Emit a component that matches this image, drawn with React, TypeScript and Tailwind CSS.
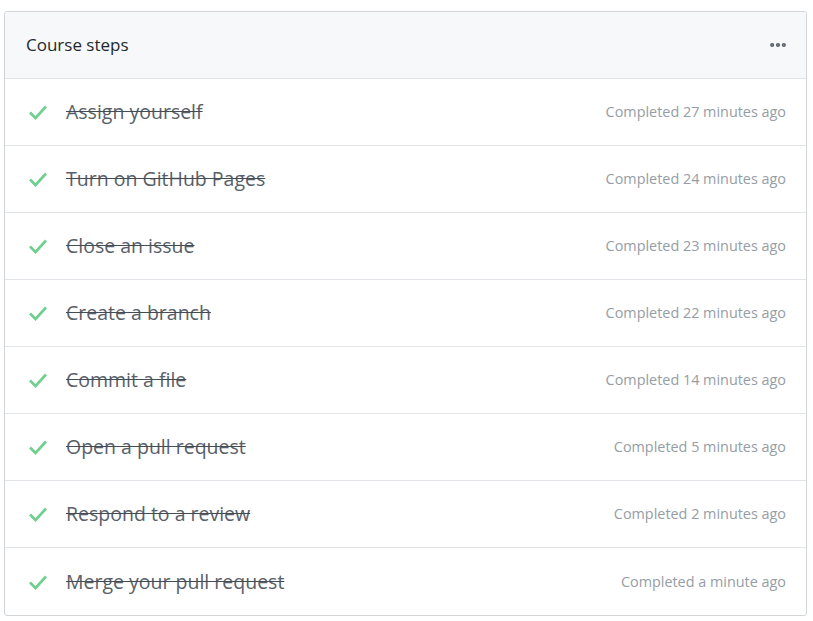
import { MoreHorizontal } from 'lucide-react'

const steps = [
  { title: 'Assign yourself', done: 'Completed 27 minutes ago' },
  { title: 'Turn on GitHub Pages', done: 'Completed 24 minutes ago' },
  { title: 'Close an issue', done: 'Completed 23 minutes ago' },
  { title: 'Create a branch', done: 'Completed 22 minutes ago' },
  { title: 'Commit a file', done: 'Completed 14 minutes ago' },
  { title: 'Open a pull request', done: 'Completed 5 minutes ago' },
  { title: 'Respond to a review', done: 'Completed 2 minutes ago' },
  { title: 'Merge your pull request', done: 'Completed a minute ago' },
]

function Check() {
  return (
    <svg width="20" height="16" viewBox="0 0 20 16" className="shrink-0">
      <path d="M2 8.5 L7.5 14 L18 2.5" fill="none" stroke="#6fcf8f" strokeWidth="2.6" />
    </svg>
  )
}

export default function App() {
  return (
    <div className="min-h-screen bg-white pt-[11px] pl-[4px]" style={{ fontFamily: '"Open Sans", "Noto Sans", sans-serif' }}>
      <div className="w-[803px] rounded-[3px] border border-[#d1d5da] overflow-hidden">
        {/* Header */}
        <div className="h-[67px] bg-[#f6f8fa] border-b border-[#e1e4e8] flex items-center justify-between pl-[21px] pr-[18px]">
          <h2 className="text-[17px] text-[#24292e]">Course steps</h2>
          <MoreHorizontal className="w-5 h-5 text-[#586069]" strokeWidth={3} />
        </div>

        {steps.map((step, i) => (
          <div
            key={i}
            className={`h-[67px] flex items-center justify-between pl-[23px] pr-[20px] ${i < steps.length - 1 ? 'border-b border-[#e1e4e8]' : ''}`}
          >
            <div className="flex items-center gap-[18px]">
              <Check />
              <span className="text-[19.5px] text-[#586069] line-through decoration-[#444d56]">{step.title}</span>
            </div>
            <span className="text-[14.4px] text-[#959da5]">{step.done}</span>
          </div>
        ))}
      </div>
    </div>
  )
}
